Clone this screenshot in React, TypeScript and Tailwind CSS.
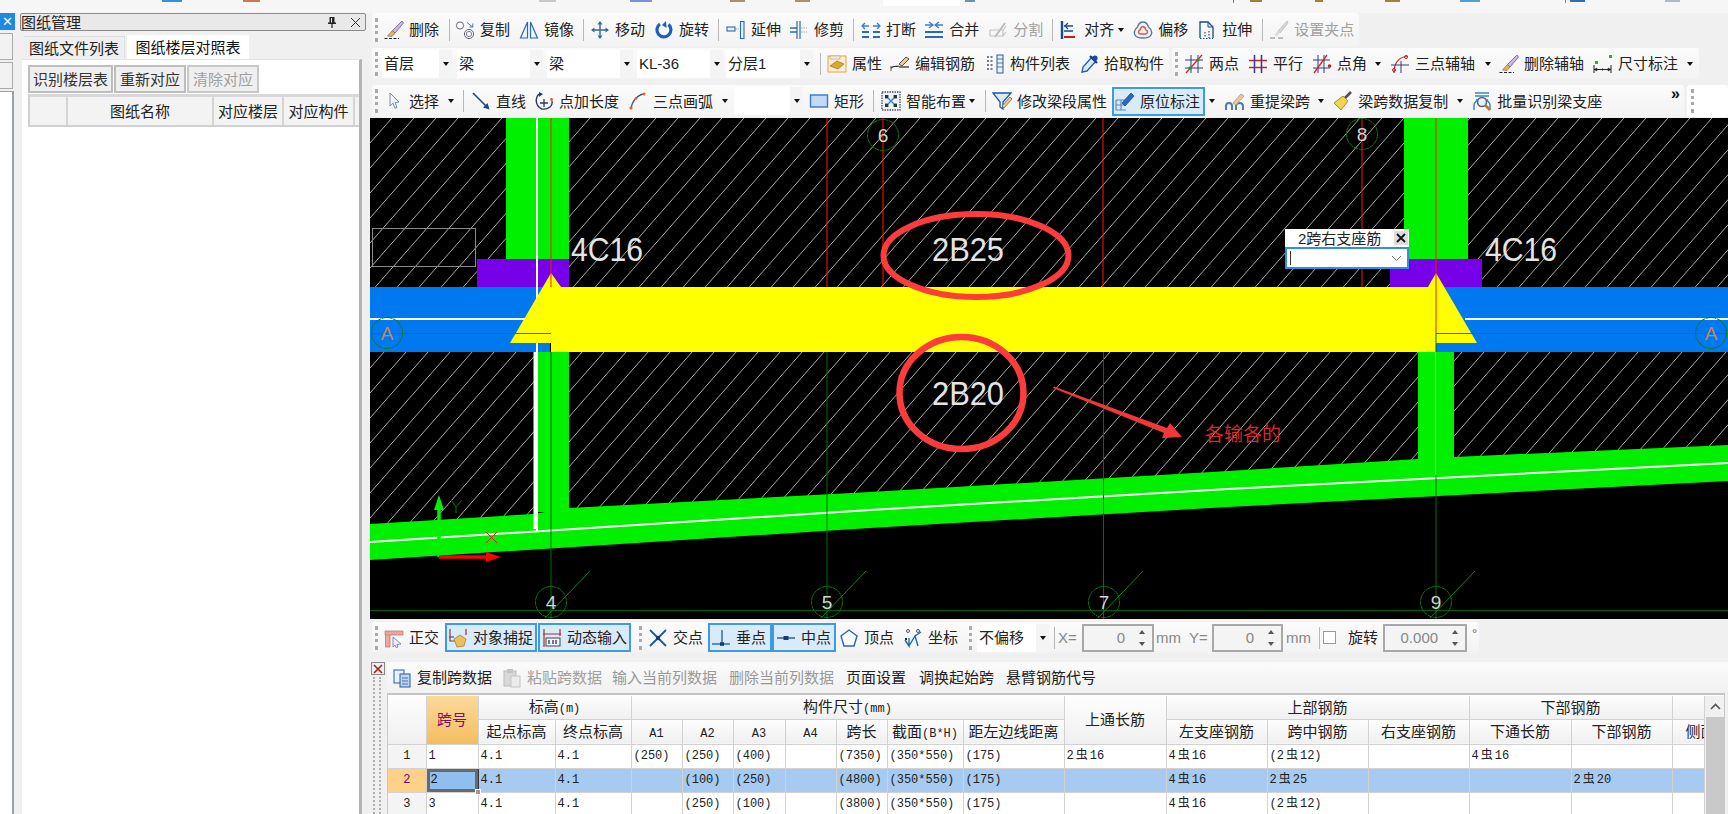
import React from 'react';

const S = ({ children }: { children: React.ReactNode }) => (
  <svg width="20" height="20" viewBox="0 0 20 20" fill="none">{children}</svg>
);
const brush = (
  <S>
    <path d="M18 1 L19.5 3 L11 13 L8.5 10.5Z" fill="#cdb8e0" stroke="#6a5a9a" strokeWidth="0.8" />
    <path d="M8.5 10.5 L11 13 L8 16.5 L3.5 16Z" fill="#eab060" stroke="#7a5a20" strokeWidth="0.6" />
    <path d="M0.5 18.5 H15" stroke="#223" strokeWidth="1.2" strokeDasharray="3 1.5" />
  </S>
);
const I: Record<string, React.ReactNode> = {
  del: brush,
  copy: (
    <S>
      <circle cx="5" cy="5.5" r="3.6" stroke="#667" strokeWidth="1" />
      <circle cx="14" cy="14" r="4.6" stroke="#667" strokeWidth="1" />
      <circle cx="14" cy="14" r="2.6" stroke="#667" strokeWidth="0.8" />
      <path d="M12 2.5 L17.5 7 M14.5 7 H17.8 V3.5" stroke="#4a78a8" strokeWidth="1" />
    </S>
  ),
  mirror: (
    <S>
      <path d="M8.5 2 L1.5 18 H8.5Z" stroke="#2a6ab0" strokeWidth="1.2" fill="#eef5fb" />
      <path d="M11.5 2 L18.5 18 H11.5Z" stroke="#2a6ab0" strokeWidth="1.2" fill="#eef5fb" />
    </S>
  ),
  move: (
    <S>
      <path d="M10 2 V18 M2 10 H18" stroke="#3a6a94" strokeWidth="1.4" />
      <path d="M10 1 L7.5 4.5 H12.5Z M10 19 L7.5 15.5 H12.5Z M1 10 L4.5 7.5 V12.5Z M19 10 L15.5 7.5 V12.5Z" fill="#3a6a94" />
    </S>
  ),
  rotate: (
    <S>
      <path d="M6 4 A7 7 0 1 0 14.5 4.5" stroke="#1a5fc0" strokeWidth="3.2" />
      <path d="M12 1 L8 5 L12.5 8Z" fill="#1a5fc0" />
    </S>
  ),
  extend: (
    <S>
      <rect x="1" y="7" width="8" height="4" fill="#e8f0f8" stroke="#2a6ab0" strokeWidth="1.1" />
      <path d="M10 9 H13" stroke="#7a9ac0" strokeWidth="1" strokeDasharray="1.2 1" />
      <rect x="14.5" y="1.5" width="3.5" height="17" fill="#e8f0f8" stroke="#2a6ab0" strokeWidth="1.1" />
    </S>
  ),
  trim: (
    <S>
      <path d="M8 1 V19 M11 1 V19" stroke="#2a6ab0" strokeWidth="1.2" />
      <path d="M1 8 H8 M1 12 H8" stroke="#2a6ab0" strokeWidth="1.4" />
      <path d="M12 8 H18 M12 12 H18" stroke="#9ab" strokeWidth="1" strokeDasharray="1.5 1" />
    </S>
  ),
  break: (
    <S>
      <path d="M1 12 H8 M12 12 H19 M1 17 H8 M12 17 H19" stroke="#2a6ab0" strokeWidth="1.8" />
      <path d="M2 6 H8 M18 6 H12 M4 3 L1 6 L4 9 M16 3 L19 6 L16 9" stroke="#3a80c8" strokeWidth="1.3" />
    </S>
  ),
  merge: (
    <S>
      <path d="M1 12 H19 M1 17 H19" stroke="#2a6ab0" strokeWidth="1.8" />
      <path d="M1 5 H8 M19 5 H12 M5 2 L9 5 L5 8 M15 2 L11 5 L15 8" stroke="#3a80c8" strokeWidth="1.3" />
    </S>
  ),
  split: (
    <S>
      <path d="M2 10 H15 L18 6 M2 16 H15 L18 12 M2 10 V16 M15 10 V16" stroke="#c4c4c4" strokeWidth="1.2" />
      <path d="M7 17 L17 3" stroke="#bbb" strokeWidth="2" />
    </S>
  ),
  align: (
    <S>
      <path d="M3 1 V19" stroke="#1a4a90" strokeWidth="2.4" />
      <path d="M5 17 H16" stroke="#c02020" strokeWidth="2" />
      <path d="M5 11 H14 M5 6 H14" stroke="#1a4a90" strokeWidth="1.3" />
      <path d="M9 3 L6 6 L9 9" stroke="#1a4a90" strokeWidth="1.2" />
    </S>
  ),
  offset: (
    <S>
      <path d="M10 2 C13 2 14.5 4 15.5 7 C18 9 19.5 12 18 15 C16.5 18 13 18 10 18 C7 18 3.5 18 2 15 C0.5 12 2 9 4.5 7 C5.5 4 7 2 10 2Z" stroke="#5a7a90" strokeWidth="1.4" fill="#eef3f7" />
      <path d="M10 6.5 C12 6.5 12.5 8.5 13 10 C15 10.5 15 14 12.5 14 H7.5 C5 14 5 10.5 7 10 C7.5 8.5 8 6.5 10 6.5Z" stroke="#e05050" strokeWidth="1.4" />
    </S>
  ),
  stretch: (
    <S>
      <path d="M3 18 V2 H11 L16 7 V18" stroke="#1a4a80" strokeWidth="1.3" />
      <path d="M11 2 V7 H16" stroke="#1a4a80" strokeWidth="1" />
      <path d="M8 12 V18 M12 11 V18 M3 18.5 H16" stroke="#1a4a80" strokeWidth="1.2" strokeDasharray="1.5 1.5" />
    </S>
  ),
  grip: (
    <S>
      <path d="M18 1 L19 3 L11 13 L9 11Z" fill="#d8d8d8" stroke="#bbb" strokeWidth="0.8" />
      <path d="M9 11 L11 13 L8 16 L5 15Z" fill="#ddd" />
      <path d="M1 18 H6 M9 18 H14" stroke="#aaa" strokeWidth="1.6" />
    </S>
  ),
  attr: (
    <S>
      <rect x="1" y="2" width="18" height="16" fill="#fbefd0" stroke="#e8a050" strokeWidth="1" />
      <path d="M3 2 H13 V5 H3Z" fill="#f0f0f0" stroke="#c89850" strokeWidth="0.6" />
      <path d="M3 12 L10 7 L17 10 L11 15Z" fill="#d8a838" stroke="#a07020" strokeWidth="0.7" />
    </S>
  ),
  edit: (
    <S>
      <path d="M1 14 C4 11 6 13 9 12" stroke="#222" strokeWidth="1.2" />
      <path d="M1 12 V17 M9 10 L16 3 L19 5 L12 12Z" stroke="#555" strokeWidth="1" fill="#f1c98a" />
      <path d="M9 13 H19" stroke="#222" strokeWidth="1.2" />
    </S>
  ),
  list: (
    <S>
      <rect x="12" y="1" width="6" height="18" stroke="#2a5f90" strokeWidth="1" fill="#e8f0f8" />
      <path d="M12 5 H18 M12 9 H18 M12 13 H18" stroke="#2a5f90" strokeWidth="0.8" />
      <path d="M2 3 H9 M2 7 H9 M2 11 H9 M2 15 H9" stroke="#456" strokeWidth="1.3" strokeDasharray="2 1.5" />
    </S>
  ),
  pick: (
    <S>
      <path d="M13 3 L17 7 L8 17 L3 18 L4 13Z" fill="#dce9f7" stroke="#2a60b0" strokeWidth="1.4" />
      <path d="M11 2 L18 9" stroke="#153f80" strokeWidth="2.2" />
      <circle cx="16" cy="4" r="2.6" fill="#1a4a9a" />
    </S>
  ),
  twopt: (
    <S>
      <path d="M1 6 H19 M1 14 H19 M7 1 V19 M14 1 V19" stroke="#333a80" strokeWidth="1" />
      <path d="M2 19 L18 1" stroke="#e02020" strokeWidth="1.3" />
      <circle cx="6" cy="14" r="1.6" fill="#1a9a1a" />
      <circle cx="14" cy="6" r="1.6" fill="#1a9a1a" />
    </S>
  ),
  par: (
    <S>
      <path d="M1 6.5 H19 M1 13.5 H19" stroke="#d02030" strokeWidth="1.5" />
      <path d="M6.5 1 V19 M13.5 1 V19" stroke="#333a80" strokeWidth="1.5" />
    </S>
  ),
  ptang: (
    <S>
      <path d="M1 6 H18 M1 14 H18 M6 1 V19 M12 1 V19" stroke="#333a80" strokeWidth="1" />
      <path d="M2 19 L15 1" stroke="#e02020" strokeWidth="1.3" />
      <circle cx="17.5" cy="12" r="1.8" fill="#d02020" />
    </S>
  ),
  arc3ax: (
    <S>
      <path d="M4 19 C4 8 9 3 18 2" stroke="#d02020" strokeWidth="1.2" />
      <path d="M1 11 H19 M11 7 V19" stroke="#333a80" strokeWidth="1" />
      <circle cx="4" cy="16" r="1.5" stroke="#d02020" />
      <circle cx="16" cy="3" r="1.5" stroke="#d02020" />
    </S>
  ),
  dim: (
    <S>
      <path d="M1 11 V19 M18 11 V19 M1 15.5 H18" stroke="#222" strokeWidth="1" />
      <path d="M1 15.5 L4 14 V17Z M18 15.5 L15 14 V17Z M9.5 14 V17" fill="#222" stroke="#222" strokeWidth="0.5" />
      <rect x="2" y="7" width="3" height="3" fill="#30b030" />
      <rect x="16" y="1" width="3" height="3" fill="#30b030" />
    </S>
  ),
  cursor: (
    <svg width="20" height="20" viewBox="0 0 20 20" fill="none">
      <path d="M6 2 L15 11 L11 11.5 L13 16.5 L11 17.2 L9 12.2 L6 15Z" fill="#f4f6fa" stroke="#7a8aa8" strokeWidth="1" />
    </svg>
  ),
  line: (
    <S>
      <path d="M2 2 L17 17" stroke="#1a4a80" strokeWidth="1.6" />
      <path d="M18.5 18.5 L12 16.5 L16.5 12Z" fill="#1a4a80" />
    </S>
  ),
  ptlen: (
    <S>
      <path d="M5 3 C1 7 1 15 8 18 C14 19 19 15 18 10" stroke="#2a3a60" strokeWidth="1.4" />
      <path d="M5 1 L9 3 L5 6Z" fill="#2a3a60" />
      <path d="M10 8 V16 M6 12 H14" stroke="#2a3a60" strokeWidth="1.3" />
      <circle cx="17.5" cy="8.5" r="1.4" fill="#e05a30" />
    </S>
  ),
  arc3: (
    <S>
      <path d="M3 18 C4 10 9 4 16 3" stroke="#3a5a78" strokeWidth="1.3" />
      <circle cx="3" cy="17" r="1.6" fill="#e85a30" />
      <circle cx="8" cy="7.5" r="1.3" fill="#e85a30" />
      <circle cx="16" cy="3" r="1.5" fill="#e85a30" />
    </S>
  ),
  rect: (
    <S>
      <rect x="1.5" y="4" width="17" height="12" fill="#c4daf4" stroke="#3a76c8" strokeWidth="1.4" />
    </S>
  ),
  smart: (
    <S>
      <rect x="1" y="1" width="18" height="18" stroke="#556" strokeWidth="1.4" strokeDasharray="1.5 1" fill="#eef2f6" />
      <rect x="4" y="4" width="3.4" height="3.4" fill="#234" />
      <rect x="12.6" y="4" width="3.4" height="3.4" fill="#234" />
      <rect x="4" y="12.6" width="3.4" height="3.4" fill="#234" />
      <rect x="12.6" y="12.6" width="3.4" height="3.4" fill="#234" />
      <path d="M7 7 L13 13 M13 7 L7 13" stroke="#3a80c0" strokeWidth="1.4" />
    </S>
  ),
  modify: (
    <S>
      <path d="M1 2 H19 L11 11 V18 L8 16 V11Z" fill="#dceaf8" stroke="#1a5a9a" strokeWidth="1.3" />
      <path d="M10 15 L18 6 L20 8 L12 17Z" fill="#f1c98a" stroke="#765" strokeWidth="0.8" />
    </S>
  ),
  origin: (
    <S>
      <path d="M1 9 H11 M1 9 V19 H11 M6 9 V19 M1 14 H11" stroke="#5a8ac0" strokeWidth="1.2" />
      <path d="M7 12 L16 2 L19 5 L10 15Z" fill="#2a6ac0" stroke="#1a4a80" strokeWidth="0.8" />
    </S>
  ),
  rebeam: (
    <S>
      <path d="M1 19 V15 C1 11 7 11 7 15 V19 M11 19 V15 C11 11 18 11 18 15 V19" stroke="#4a7ab8" strokeWidth="2" />
      <path d="M8 12 L16 3 L19 5 L11 14Z" fill="#f2c690" stroke="#a98" strokeWidth="0.8" />
    </S>
  ),
  broom: (
    <S>
      <path d="M18 1 L12 7" stroke="#5a4a50" strokeWidth="2.6" />
      <path d="M10 5 L15 10 L8 19 L1 12Z" fill="#f0d650" stroke="#8a7a20" strokeWidth="0.8" />
    </S>
  ),
  batch: (
    <S>
      <path d="M3 2 H17 M3 5 H17" stroke="#3a8ac0" strokeWidth="1.5" />
      <path d="M2 19 V14 C2 11 5 11 5 8 M18 19 V14 C18 11 15 11 15 8" stroke="#3a8ac0" strokeWidth="1.5" />
      <circle cx="10" cy="11" r="4.5" stroke="#567" strokeWidth="1.6" fill="#e8f0f8" />
      <path d="M13 14 L18 19" stroke="#b87a30" strokeWidth="2.6" />
    </S>
  ),
  ortho: (
    <S>
      <path d="M1 3 H19 V7 H1Z M6 7 V19 H1.5 V7" fill="#e8a8a0" stroke="#c87a70" strokeWidth="0.8" />
      <path d="M9 9 L17 16 L13 16.5 L14 19 L12 19.5 L11 17 L9 19Z" fill="#eef" stroke="#67a" strokeWidth="0.8" />
    </S>
  ),
  snap: (
    <S>
      <path d="M2 1 V13 H8 M18 1 V7" stroke="#a03030" strokeWidth="1.2" />
      <path d="M1 9 H6" stroke="#1a60b0" strokeWidth="1.2" />
      <path d="M6 11 L12 7 L18 11 L16 18 L9 19Z" fill="#e8c060" stroke="#a88030" strokeWidth="0.8" />
    </S>
  ),
  dyn: (
    <S>
      <path d="M2 1 V19 M18 1 V8" stroke="#a03030" strokeWidth="1.2" />
      <path d="M1 6 H19" stroke="#a03030" strokeWidth="1" />
      <rect x="4" y="10" width="14" height="8" fill="#f4f4f4" stroke="#445" strokeWidth="1" />
      <path d="M7 12 V16 M11 12 V16 M14 12 V16" stroke="#223" strokeWidth="1.2" />
    </S>
  ),
  cross: (
    <S>
      <path d="M2 2 L18 18 M18 2 L2 18" stroke="#1a5a9a" strokeWidth="1.8" />
      <circle cx="10" cy="10" r="2.2" fill="#1a3a6a" />
    </S>
  ),
  perp: (
    <S>
      <path d="M11 2 V16" stroke="#1a5a9a" strokeWidth="1.3" />
      <path d="M1 16 H19" stroke="#1a5a9a" strokeWidth="1.3" />
      <rect x="9" y="14.2" width="4" height="3.6" fill="#1a3a7a" />
    </S>
  ),
  mid: (
    <S>
      <path d="M1 10 H19" stroke="#1a5a9a" strokeWidth="1.4" />
      <rect x="7.5" y="8" width="5" height="4" fill="#1a3a7a" />
    </S>
  ),
  vertex: (
    <S>
      <path d="M10 2 L18 8 L15 18 H5 L2 8Z" stroke="#2a66b0" strokeWidth="1.4" fill="#f8fbff" />
    </S>
  ),
  coord: (
    <S>
      <path d="M2 12 L6 18 L6 10 M6 18 L12 8 L15 18 M12 8 L18 4" stroke="#1a6ab0" strokeWidth="1.4" />
      <path d="M2 10 L4 12 M2 12 L4 10" stroke="#223" />
      <circle cx="5" cy="3" r="1.5" stroke="#556" />
      <circle cx="15" cy="3" r="1.5" stroke="#556" />
    </S>
  ),
  copyd: (
    <S>
      <rect x="2" y="2" width="10" height="13" fill="#e8f0fb" stroke="#2a5a9a" strokeWidth="1" />
      <rect x="8" y="6" width="10" height="13" fill="#bcd6f3" stroke="#2a5a9a" strokeWidth="1" />
      <path d="M10 10 H16 M10 13 H16 M10 16 H16" stroke="#2a5a9a" strokeWidth="0.8" />
    </S>
  ),
  paste: (
    <S>
      <rect x="2" y="3" width="12" height="15" fill="#d8d8d8" stroke="#bbb" />
      <rect x="5" y="1" width="6" height="4" fill="#c4c4c4" />
      <rect x="9" y="8" width="9" height="11" fill="#ececec" stroke="#c4c4c4" />
    </S>
  ),
};

const Caret = ({ c }: { c: string }) => (
  <span className={`w-0 h-0 border-x-[3px] border-t-[4px] border-x-transparent border-t-[#111] box-content shrink-0 ${c}`} />
);
const Grip = ({ c = 'ml-[3px]' }: { c?: string }) => (
  <span className={`w-[3px] h-[24px] shrink-0 border-l-[3px] border-dotted border-[#aaa] ${c}`} />
);
const Sep = ({ c }: { c: string }) => <span className={`w-px h-[22px] shrink-0 bg-[#b8b8b8] ${c}`} />;

const Tool = ({ ic, t, c = '', gray, caret }: { ic: string; t: string; c?: string; gray?: boolean; caret?: string }) => (
  <div className={`flex items-center shrink-0 ${c}`}>
    <span className="w-5 h-5 shrink-0 flex items-center justify-center">{I[ic]}</span>
    <span className={`ml-[5px] text-[15px] leading-none whitespace-nowrap ${gray ? 'text-[#a0a0a0]' : 'text-[#222]'}`}>{t}</span>
    {caret && <Caret c={`mr-[1px] ${caret}`} />}
  </div>
);
const Hi = ({ c, children }: { c: string; children: React.ReactNode }) => (
  <div className={`flex items-center shrink-0 h-[29px] border-2 border-[#3d9be0] bg-[#d9ebf8] ${c}`}>{children}</div>
);
const Combo = ({ c, t = '' }: { c: string; t?: string }) => (
  <div className={`flex items-center h-[28px] bg-white shrink-0 ${c}`}>
    <span className="flex-1 pl-[2px] text-[15px] leading-none text-[#222] whitespace-nowrap">{t}</span>
    <span className="w-[13px] h-full bg-[#f4f4f4] flex items-center justify-center">
      <Caret c="" />
    </span>
  </div>
);
const Band = ({ c, children }: { c: string; children: React.ReactNode }) => (
  <div className={`flex items-center rounded-[3px] bg-gradient-to-b from-[#fbfbfb] to-[#f3f3f3] shrink-0 ${c}`}>{children}</div>
);
const Spin = ({ c, v }: { c: string; v: string }) => (
  <div className={`flex items-center justify-end h-[28px] border-2 border-[#a8a8a8] bg-[#f4f4f4] shrink-0 ${c}`}>
    <span className="text-[15px] leading-none text-[#888]">{v}</span>
    <span className="w-[20px] ml-[7px] h-full flex flex-col items-center justify-center gap-[8px]">
      <span className="w-0 h-0 border-x-[3px] border-b-[4px] border-x-transparent border-b-[#555]" />
      <span className="w-0 h-0 border-x-[3px] border-t-[4px] border-x-transparent border-t-[#555]" />
    </span>
  </div>
);

const Bubble = ({ x, y, t, tail, color = '#d4d4d4' }: { x: number; y: number; t: string; tail?: boolean; color?: string }) => (
  <g>
    {tail && <path d={`M${x - 6} ${y + 16} L${x + 39} ${y - 31}`} stroke="#0a8a0a" strokeWidth="1" />}
    <circle cx={x} cy={y} r="15.5" stroke="#0a7a0a" strokeWidth="1" fill="none" strokeDasharray="5 0.6" />
    <text x={x} y={y + 7} textAnchor="middle" fontSize="19" fill={color}>{t}</text>
  </g>
);
const Big = ({ x, y, t }: { x: number; y: number; t: string }) => (
  <text x={x} y={y} fontSize="33" fill="#e4e4e4" textLength="72" lengthAdjust="spacingAndGlyphs">{t}</text>
);

const Canvas = () => (
  <svg width="1358" height="501" viewBox="370 118 1358 501" className="block">
    <defs>
      <pattern id="hatch" patternUnits="userSpaceOnUse" x="370" y="118" width="22" height="25">
        <path d="M-2 27.3 L24 -2.3" stroke="#bcbcbc" strokeWidth="0.9" />
      </pattern>
    </defs>
    <rect x="370" y="118" width="1358" height="501" fill="#000" />
    <rect x="370" y="118" width="1358" height="501" fill="url(#hatch)" />
    <polygon points="370,540 870,510 1228,489 1728,463 1728,619 370,619" fill="#000" />
    <rect x="372.5" y="228.5" width="103" height="38" stroke="#8a8a8a" fill="none" />
    {/* walls */}
    <rect x="506" y="118" width="63" height="142" fill="#00f000" />
    <rect x="537" y="352" width="32" height="160" fill="#00f000" />
    <rect x="1404" y="118" width="64" height="142" fill="#00f000" />
    <rect x="1418" y="352" width="36" height="130" fill="#00f000" />
    <polygon points="370,524 533,514 569,508 870,492 1228,471 1418,459 1454,457 1728,445 1728,481 1228,507 870,528 370,560" fill="#00f000" />
    <polyline points="370,542 870,510 1228,489 1728,463" stroke="#fff" strokeWidth="2" fill="none" />
    {/* columns */}
    <rect x="477" y="259" width="92" height="28" fill="#7800e8" />
    <rect x="1390" y="259" width="92" height="28" fill="#7800e8" />
    {/* beams */}
    <rect x="370" y="287" width="180" height="65" fill="#0078f0" />
    <rect x="1436" y="287" width="292" height="65" fill="#0078f0" />
    <rect x="370" y="318" width="170" height="2" fill="#fff" />
    <rect x="1465" y="318" width="263" height="2" fill="#fff" />
    <rect x="536" y="118" width="2" height="413" fill="#fff" />
    <rect x="533.5" y="352" width="4" height="177" fill="#fff" />
    <polygon points="551,273 561,287 1428,287 1436,273 1477,343 1436,343 1436,352 551,352 551,343 510,343" fill="#ffff00" />
    {/* axes */}
    <path d="M551 118 V287 M827 118 V287 M883 118 V287 M1103 118 V287 M1362 118 V287 M1436 118 V333" stroke="#ff1800" strokeWidth="1" />
    <path d="M372 333.5 H551 M1436 333.5 H1726" stroke="#ff1000" strokeWidth="1" />
    <path d="M551 352 V619 M827 352 V619 M1103.5 352 V619 M1436 475 V619 M1436 333 V352" stroke="#007000" strokeWidth="1" />
    <path d="M1435.5 352 V475" stroke="#c8c8c8" strokeWidth="1" />
    <path d="M370 610.5 H1728" stroke="#006400" strokeWidth="1" />
    <Bubble x={387} y={333} t="A" color="#c08a50" />
    <Bubble x={1711} y={333} t="A" color="#c08a50" />
    <Bubble x={883} y={135} t="6" />
    <Bubble x={1362} y={134} t="8" />
    <Bubble x={551} y={602} t="4" tail />
    <Bubble x={827} y={602} t="5" tail />
    <Bubble x={1104} y={602} t="7" tail />
    <Bubble x={1436} y={602} t="9" tail />
    {/* ucs */}
    <path d="M439 505 V557" stroke="#00f000" strokeWidth="3.5" />
    <path d="M439 495 L434 510 H444Z" fill="#00f000" />
    <path d="M439 557 H488" stroke="#ff0000" strokeWidth="3.5" />
    <path d="M501 557 L486 552 V562Z" fill="#ff0000" />
    <path d="M451 500 L456 507 L462 500 M456 507 V513" stroke="#008000" strokeWidth="1" />
    <path d="M486 532 L497 543 M497 532 L486 543" stroke="#c03010" strokeWidth="1" />
    {/* text */}
    <Big x={571} y={261} t="4C16" />
    <Big x={1485} y={261} t="4C16" />
    <Big x={932} y={261} t="2B25" />
    <Big x={932} y={405} t="2B20" />
    {/* annotations */}
    <ellipse cx="976" cy="255.5" rx="92.5" ry="41.5" stroke="#ff3c3c" strokeWidth="6" fill="none" />
    <ellipse cx="961.5" cy="393" rx="62" ry="56" stroke="#ff3c3c" strokeWidth="6.5" fill="none" />
    <polygon points="1054,386.5 1167,428 1170,423 1182,437 1162,438 1164,433 1053,388" fill="#f03838" />
    <text x="1205" y="441" fontSize="19" fill="#d82828">各输各的</text>
  </svg>
);

const COLS = ['w-[38px]', 'w-[52px]', 'w-[77px]', 'w-[76px]', 'w-[51px]', 'w-[51px]', 'w-[52px]', 'w-[51px]', 'w-[51px]', 'w-[76px]', 'w-[101px]', 'w-[102px]', 'w-[101px]', 'w-[101px]', 'w-[101px]', 'w-[102px]', 'w-[101px]', 'w-[32px]'];
const R = '4虫16';
const ROWS = [
  ['1', '1', '4.1', '4.1', '(250)', '(250)', '(400)', '', '(7350)', '(350*550)', '(175)', '2虫16', R, '(2虫12)', '', R, '', ''],
  ['2', '2', '4.1', '4.1', '', '(100)', '(250)', '', '(4800)', '(350*550)', '(175)', '', R, '2虫25', '', '', '2虫20', ''],
  ['3', '3', '4.1', '4.1', '', '(250)', '(100)', '', '(3800)', '(350*550)', '(175)', '', R, '(2虫12)', '', '', '', ''],
];
const th = 'p-0 h-[23px] font-normal text-[15px] leading-none text-center text-[#222] whitespace-nowrap overflow-hidden border-r border-b border-[#d2d2d2] bg-gradient-to-b from-[#fdfdfd] to-[#f0f0f0]';
const mono = "font-['Liberation_Mono','Noto_Sans_CJK_SC',monospace] text-[12px]";

const Rebar = ({ v }: { v: string }) => {
  const i = v.indexOf('虫');
  if (i < 0) return <>{v}</>;
  return (
    <>
      {v.slice(0, i)}
      <span className="mx-[2px]">虫</span>
      {v.slice(i + 1)}
    </>
  );
};

const DataTable = () => (
  <table className="table-fixed border-collapse w-[1316px]">
    <colgroup>
      {COLS.map((c, i) => (
        <col key={i} className={c} />
      ))}
    </colgroup>
    <thead>
      <tr>
        <th rowSpan={2} className={th} />
        <th rowSpan={2} className="p-0 font-normal text-[15px] text-[#7a1060] border-r border-b border-[#d2d2d2] bg-gradient-to-b from-[#fbd99a] to-[#f3bd5c]">跨号</th>
        <th colSpan={2} className={th}>标高<span className={mono}>(m)</span></th>
        <th colSpan={7} className={th}>构件尺寸<span className={mono}>(mm)</span></th>
        <th rowSpan={2} className={th}>上通长筋</th>
        <th colSpan={3} className={th}>上部钢筋</th>
        <th colSpan={2} className={th}>下部钢筋</th>
        <th className={th} />
      </tr>
      <tr className="h-[25px]">
        <th className={th}>起点标高</th>
        <th className={th}>终点标高</th>
        <th className={th}><span className={mono}>A1</span></th>
        <th className={th}><span className={mono}>A2</span></th>
        <th className={th}><span className={mono}>A3</span></th>
        <th className={th}><span className={mono}>A4</span></th>
        <th className={th}>跨长</th>
        <th className={th}>截面<span className={mono}>(B*H)</span></th>
        <th className={th}>距左边线距离</th>
        <th className={th}>左支座钢筋</th>
        <th className={th}>跨中钢筋</th>
        <th className={th}>右支座钢筋</th>
        <th className={th}>下通长筋</th>
        <th className={th}>下部钢筋</th>
        <th className={`${th} !text-left pl-[13px]`}>侧面钢筋</th>
      </tr>
    </thead>
    <tbody>
      {ROWS.map((r, ri) => (
        <tr key={ri} className={ri === 1 ? 'bg-[#a6caf0]' : 'bg-white'}>
          {r.map((v, ci) => {
            if (ci === 0)
              return (
                <td key={ci} className={`p-0 h-[24px] text-center border-r border-b border-[#d2d2d2] ${mono} ${ri === 1 ? 'bg-[#ffd088] text-[#6a0a6a]' : 'bg-[#f4f4f4] text-[#222]'}`}>{v}</td>
              );
            if (ci === 1 && ri === 1)
              return (
                <td key={ci} className={`p-0 h-[24px] relative border-b border-[#d2d2d2] ${mono}`}>
                  <div className="absolute inset-0 border-[3px] border-[#6a6a6a] bg-[#8fbfee] pl-[1px] flex items-center text-[#111]">{v}</div>
                  <span className="absolute -right-[3px] -bottom-[3px] w-[6px] h-[6px] bg-[#999] border border-white" />
                </td>
              );
            return (
              <td key={ci} className={`p-0 pl-[2px] h-[24px] whitespace-nowrap border-r border-b border-[#d2d2d2] text-[#222] ${mono} ${ci === 2 ? 'border-l border-l-[#333]' : ''}`}><Rebar v={v} /></td>
            );
          })}
        </tr>
      ))}
    </tbody>
  </table>
);

const Dots = () => (
  <div className="w-[8px] flex-1 ml-[3px] mt-[2px] border-x-2 border-dotted border-[#b0b0b0]" />
);

export default function App() {
  return (
    <div className="w-[1728px] h-[814px] overflow-hidden flex flex-col bg-[#f0f0f0] font-['Liberation_Sans','Noto_Sans_CJK_SC',sans-serif]">
      {/* strip above */}
      <div className="h-[13px] flex items-start shrink-0 bg-[#f6f6f6]">
        <span className="ml-[162px] w-[20px] h-[2px] bg-[#3a90d8]" />
        <span className="ml-[61px] w-[17px] h-[2px] bg-[#c87a50]" />
        <span className="ml-[279px] w-[17px] h-[2px] bg-[#c8c8c8]" />
        <span className="ml-[74px] w-[22px] h-[2px] bg-[#8090d8]" />
        <span className="ml-[78px] w-[15px] h-[2px] bg-[#a89070]" />
        <span className="ml-[50px] w-[15px] h-[2px] bg-[#a89070]" />
        <span className="ml-[73px] w-[77px] h-[6px] bg-white" />
        <span className="ml-[5px] w-[10px] h-[2px] bg-[#7090b0]" />
        <span className="ml-[258px] w-px h-[3px] bg-[#888]" />
        <span className="ml-[16px] w-[12px] h-[2px] bg-[#a08040]" />
        <span className="ml-[53px] w-[8px] h-[2px] bg-[#a08040]" />
        <span className="ml-[62px] w-[15px] h-[2px] bg-[#a08040]" />
        <span className="ml-[60px] w-[20px] h-[2px] bg-[#50a0d0]" />
        <span className="ml-[85px] w-px h-[3px] bg-[#888]" />
        <span className="ml-[4px] w-[15px] h-[2px] bg-[#3070b0]" />
        <span className="ml-[80px] w-[15px] h-[2px] bg-[#b0b8c8]" />
      </div>
      <div className="flex flex-1 min-h-0">
        {/* left edge */}
        <div className="w-[14px] shrink-0 flex flex-col">
          <div className="w-[15px] h-[17px] bg-[#1e88e5] flex items-center justify-center text-white text-[13px] leading-none">✕</div>
          <div className="h-[27px] mt-[3px] w-[13px] bg-[#f2f2f2] border-y border-r border-[#aaa]" />
          <div className="h-[27px] mt-[2px] w-[13px] bg-[#f2f2f2] border-y border-r border-[#aaa]" />
          <div className="flex-1 mt-[2px] bg-white border-r-2 border-t border-[#9aa0a8]" />
        </div>
        {/* drawing panel */}
        <div className="w-[356px] shrink-0 flex flex-col">
          <div className="ml-[6px] w-[346px] h-[18px] flex items-center justify-between rounded-[2px] border border-[#8a8a8a] bg-[#e9e9e9] shrink-0">
            <span className="text-[15px] leading-none text-[#222]">图纸管理</span>
            <div className="flex items-center gap-[12px] pr-[4px]">
              <svg width="12" height="12" viewBox="0 0 12 12">
                <path d="M3.5 1 H8.5 V6.5 H10 V8 H6.6 V12 H5.4 V8 H2 V6.5 H3.5Z M5 2 V6.5 H6 V2Z" fill="#222" fillRule="evenodd" />
              </svg>
              <svg width="11" height="11" viewBox="0 0 11 11">
                <path d="M1 1 L10 10 M10 1 L1 10" stroke="#333" strokeWidth="1" />
              </svg>
            </div>
          </div>
          <div className="flex items-end h-[28px] shrink-0 pl-[10px]">
            <div className="w-[101px] h-[23px] flex items-center justify-center text-[15px] leading-none text-[#222] bg-[#efefef] border-t border-r border-[#ddd]">图纸文件列表</div>
            <div className="ml-[2px] w-[122px] h-[24px] flex items-center justify-center text-[15px] leading-none text-[#111] bg-white">图纸楼层对照表</div>
          </div>
          <div className="ml-[8px] w-[340px] flex-1 min-h-0 bg-white border-r-[3px] border-[#b4b4b4] border-t border-t-[#e4e4e4] pl-[6px] flex flex-col">
            <div className="flex items-center h-[28px] mt-[5px] shrink-0">
              <div className="w-[85px] h-[28px] flex items-center justify-center text-[15px] leading-none text-[#333] bg-[#efefef] border-2 border-[#bdbdbd]">识别楼层表</div>
              <div className="ml-[1px] w-[72px] h-[28px] flex items-center justify-center text-[15px] leading-none text-[#333] bg-[#efefef] border-2 border-[#bdbdbd]">重新对应</div>
              <div className="ml-[1px] w-[72px] h-[28px] flex items-center justify-center text-[15px] leading-none text-[#a0a0a0] bg-[#efefef] border-2 border-[#c8c8c8]">清除对应</div>
            </div>
            <div className="mt-[1px] border-t-[3px] border-[#d8d8d8] flex h-[33px] bg-[#f3f3f3] border-b-2 border-b-[#d0d0d0] shrink-0 border-l-2 border-l-[#d0d0d0]">
              <div className="w-[38px] border-r-2 border-[#d4d4d4]" />
              <div className="w-[146px] flex items-center justify-center text-[15px] leading-none text-[#222] border-r-2 border-[#d4d4d4]">图纸名称</div>
              <div className="w-[70px] flex items-center justify-center text-[15px] leading-none text-[#222] border-r-2 border-[#d4d4d4]">对应楼层</div>
              <div className="w-[71px] flex items-center justify-center text-[15px] leading-none text-[#222] border-r-2 border-[#d4d4d4]">对应构件</div>
            </div>
          </div>
        </div>
        {/* main */}
        <div className="w-[1358px] shrink-0 flex flex-col">
          {/* toolbar 1 */}
          <Band c="ml-[2px] w-[987px] h-[33px]">
            <Grip />
            <Tool ic="del" t="删除" c="ml-[6px]" />
            <Sep c="ml-[10px]" />
            <Tool ic="copy" t="复制" c="ml-[5px]" />
            <Tool ic="mirror" t="镜像" c="ml-[9px]" />
            <Sep c="ml-[9px]" />
            <Tool ic="move" t="移动" c="ml-[6px]" />
            <Tool ic="rotate" t="旋转" c="ml-[9px]" />
            <Sep c="ml-[9px]" />
            <Tool ic="extend" t="延伸" c="ml-[7px]" />
            <Tool ic="trim" t="修剪" c="ml-[8px]" />
            <Sep c="ml-[9px]" />
            <Tool ic="break" t="打断" c="ml-[7px]" />
            <Tool ic="merge" t="合并" c="ml-[8px]" />
            <Tool ic="split" t="分割" c="ml-[9px]" gray />
            <Sep c="ml-[9px]" />
            <Tool ic="align" t="对齐" c="ml-[6px]" caret="ml-[4px]" />
            <Tool ic="offset" t="偏移" c="ml-[8px]" />
            <Tool ic="stretch" t="拉伸" c="ml-[9px]" />
            <Sep c="ml-[10px]" />
            <Tool ic="grip" t="设置夹点" c="ml-[6px]" gray />
          </Band>
          {/* toolbar 2 */}
          <div className="flex h-[31px] mt-[2px] shrink-0">
            <Band c="ml-[2px] w-[797px] h-full">
              <Grip />
              <Combo c="ml-[4px] w-[70px]" t="首层" />
              <Combo c="ml-[5px] w-[86px]" t="梁" />
              <Combo c="ml-[4px] w-[86px]" t="梁" />
              <Combo c="ml-[4px] w-[86px]" t="KL-36" />
              <Combo c="ml-[3px] w-[87px]" t="分层1" />
              <Sep c="ml-[7px]" />
              <Tool ic="attr" t="属性" c="ml-[6px]" />
              <Tool ic="edit" t="编辑钢筋" c="ml-[8px]" />
              <Tool ic="list" t="构件列表" c="ml-[10px]" />
              <Tool ic="pick" t="拾取构件" c="ml-[9px]" />
            </Band>
            <Band c="ml-[3px] w-[527px] h-full">
              <Grip />
              <Tool ic="twopt" t="两点" c="ml-[6px]" />
              <Tool ic="par" t="平行" c="ml-[9px]" />
              <Tool ic="ptang" t="点角" c="ml-[9px]" caret="ml-[8px]" />
              <Tool ic="arc3ax" t="三点辅轴" c="ml-[8px]" caret="ml-[10px]" />
              <Tool ic="del" t="删除辅轴" c="ml-[7px]" />
              <Tool ic="dim" t="尺寸标注" c="ml-[9px]" caret="ml-[9px]" />
            </Band>
          </div>
          {/* toolbar 3 */}
          <div className="flex h-[32px] mt-[6px] shrink-0">
            <Band c="ml-[2px] w-[1312px] h-full">
              <Grip />
              <Tool ic="cursor" t="选择" c="ml-[6px]" caret="ml-[9px]" />
              <Sep c="ml-[8px]" />
              <Tool ic="line" t="直线" c="ml-[7px]" />
              <Tool ic="ptlen" t="点加长度" c="ml-[8px]" />
              <Tool ic="arc3" t="三点画弧" c="ml-[9px]" caret="ml-[9px]" />
              <Combo c="ml-[5px] w-[69px]" />
              <Tool ic="rect" t="矩形" c="ml-[6px]" />
              <Sep c="ml-[9px]" />
              <Tool ic="smart" t="智能布置" c="ml-[7px]" caret="ml-[3px]" />
              <Sep c="ml-[9px]" />
              <Tool ic="modify" t="修改梁段属性" c="ml-[6px]" />
              <Hi c="ml-[5px] w-[93px] pl-[1px]">
                <Tool ic="origin" t="原位标注" />
              </Hi>
              <Caret c="ml-[4px] mr-[1px]" />
              <Tool ic="rebeam" t="重提梁跨" c="ml-[9px]" caret="ml-[8px]" />
              <Tool ic="broom" t="梁跨数据复制" c="ml-[8px]" caret="ml-[9px]" />
              <Tool ic="batch" t="批量识别梁支座" c="ml-[8px]" />
              <span className="ml-auto mr-[4px] mb-[14px] text-[16px] font-bold leading-none text-[#111]">»</span>
            </Band>
            <Band c="ml-[3px] flex-1 h-full !from-white !to-white">
              <Grip c="ml-[4px]" />
            </Band>
          </div>
          {/* canvas */}
          <div className="relative h-[501px] mt-[1px] shrink-0">
            <Canvas />
            <div className="absolute left-[915px] top-[111px] w-[124px] h-[40px] bg-white flex flex-col">
              <div className="h-[18px] flex items-center pl-[13px] text-[15px] leading-none text-[#222] shrink-0">
                <span className="w-[96px] whitespace-nowrap">2跨右支座筋</span>
                <span className="w-[14px] h-[14px] bg-[#ddd] flex items-center justify-center">
                  <svg width="10" height="10" viewBox="0 0 10 10">
                    <path d="M1 1 L9 9 M9 1 L1 9" stroke="#111" strokeWidth="1.8" />
                  </svg>
                </span>
              </div>
              <div className="flex-1 flex items-center justify-between border-2 border-[#2f8fe0] pl-[3px] pr-[5px]">
                <span className="w-px h-[14px] bg-[#333]" />
                <svg width="11" height="7" viewBox="0 0 11 7">
                  <path d="M1 1 L5.5 5.5 L10 1" stroke="#666" strokeWidth="1" fill="none" />
                </svg>
              </div>
            </div>
          </div>
          {/* status */}
          <Band c="ml-[2px] mt-[3px] w-[1107px] h-[31px]">
            <Grip />
            <Tool ic="ortho" t="正交" c="ml-[6px]" />
            <Hi c="ml-[6px] w-[92px] pl-[1px]"><Tool ic="snap" t="对象捕捉" /></Hi>
            <Hi c="ml-[1px] w-[93px] pl-[2px]"><Tool ic="dyn" t="动态输入" /></Hi>
            <Grip c="ml-[8px]" />
            <Tool ic="cross" t="交点" c="ml-[6px]" />
            <Hi c="ml-[5px] w-[64px] pl-[1px]"><Tool ic="perp" t="垂点" /></Hi>
            <Hi c="w-[64px] pl-[2px]"><Tool ic="mid" t="中点" /></Hi>
            <Tool ic="vertex" t="顶点" c="ml-[3px]" />
            <Tool ic="coord" t="坐标" c="ml-[9px]" />
            <Grip c="ml-[11px]" />
            <Combo c="ml-[5px] w-[72px]" t="不偏移" />
            <Sep c="ml-[5px]" />
            <span className="ml-[3px] w-[24px] text-[15px] leading-none text-[#888]">X=</span>
            <Spin c="w-[72px]" v="0" />
            <span className="w-[33px] pl-[2px] text-[15px] leading-none text-[#888]">mm</span>
            <span className="w-[25px] pl-[2px] text-[15px] leading-none text-[#888]">Y=</span>
            <Spin c="w-[71px]" v="0" />
            <span className="w-[34px] pl-[3px] text-[15px] leading-none text-[#888]">mm</span>
            <Sep c="ml-[2px]" />
            <span className="ml-[3px] w-[13px] h-[13px] border border-[#999] bg-white shrink-0" />
            <span className="ml-[12px] text-[15px] leading-none text-[#222]">旋转</span>
            <Spin c="ml-[5px] w-[84px]" v="0.000" />
            <span className="ml-[5px] mb-[8px] text-[13px] leading-none text-[#666]">°</span>
          </Band>
          {/* bottom panel */}
          <div className="flex flex-1 min-h-0 mt-[9px]">
            <div className="w-[17px] shrink-0 flex flex-col">
              <div className="ml-[1px] w-[14px] h-[13px] border border-[#888] bg-[#eee] flex items-center justify-center">
                <svg width="10" height="10" viewBox="0 0 10 10">
                  <path d="M1 1 L9 9 M9 1 L1 9" stroke="#a02020" strokeWidth="1.6" />
                </svg>
              </div>
              <Dots />
            </div>
            <div className="flex-1 min-w-0 flex flex-col">
              <div className="h-[31px] shrink-0 flex items-center bg-gradient-to-b from-[#fbfbfb] to-[#f1f1f1] pl-[5px]">
                <Tool ic="copyd" t="复制跨数据" c="" />
                <span className="ml-[10px] flex items-center">
                  <Tool ic="paste" t="粘贴跨数据" gray />
                </span>
                <span className="ml-[10px] text-[15px] leading-none text-[#999]">输入当前列数据</span>
                <span className="ml-[12px] text-[15px] leading-none text-[#999]">删除当前列数据</span>
                <span className="ml-[12px] text-[15px] leading-none text-[#222]">页面设置</span>
                <span className="ml-[13px] text-[15px] leading-none text-[#222]">调换起始跨</span>
                <span className="ml-[12px] text-[15px] leading-none text-[#222]">悬臂钢筋代号</span>
              </div>
              <div className="flex-1 min-h-0 flex items-start border-t-2 border-[#c4c4c4] pt-[1px] overflow-hidden w-[1338px] border-x border-x-[#c8c8c8] bg-white">
                <DataTable />
                <div className="w-[21px] h-full shrink-0 bg-[#f0f0f0] flex flex-col items-center">
                  <div className="h-[21px] flex items-center justify-center">
                    <svg width="11" height="7" viewBox="0 0 11 7">
                      <path d="M1 6 L5.5 1.5 L10 6" stroke="#555" strokeWidth="1.6" fill="none" />
                    </svg>
                  </div>
                  <div className="w-[18px] flex-1 bg-[#c9c9c9]" />
                </div>
              </div>
            </div>
          </div>
        </div>
      </div>
    </div>
  );
}
